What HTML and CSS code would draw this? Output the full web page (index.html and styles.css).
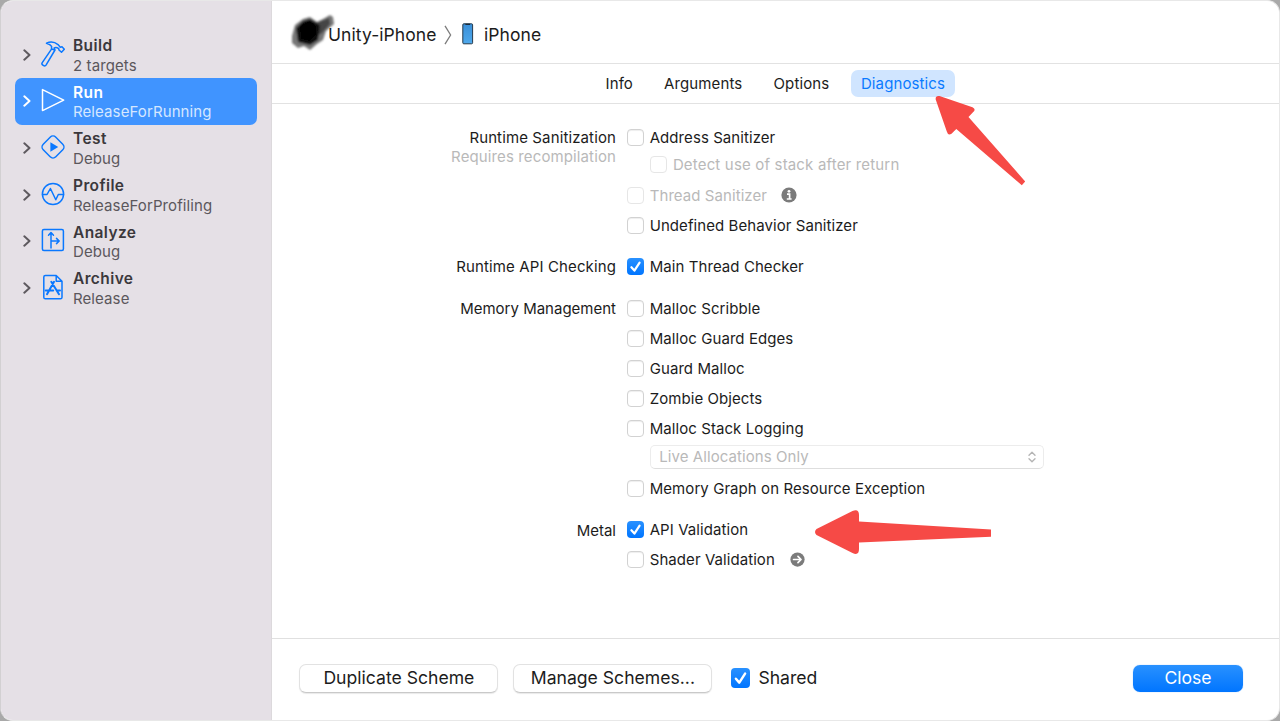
FILE: index.html
```html
<!DOCTYPE html>
<html lang="en">
<head>
<meta charset="utf-8">
<title>Edit Scheme</title>
<link rel="stylesheet" href="styles.css">
</head>
<body>
<svg width="0" height="0" class="defs">
  <symbol id="chev" viewBox="0 0 8 12"><path d="M1.3 1.3 6.5 6 1.3 10.7" fill="none" stroke="currentColor" stroke-width="2" stroke-linecap="round" stroke-linejoin="round"/></symbol>
  <symbol id="tick" viewBox="0 0 17 17"><path d="M4.4 9.2 7.4 12.6 12.6 4.6" fill="none" stroke="#fff" stroke-width="2.2" stroke-linecap="round" stroke-linejoin="round"/></symbol>
</svg>
<div class="window">
  <aside class="sidebar">
    <div class="item">
      <svg class="chev"><use href="#chev"/></svg>
      <svg class="icon" viewBox="0 0 26 26"><path d="M6.5 2.2C10 .6 14.5.8 18 3.6L20.3 6.2 22 5.8 24.3 8.3 21.5 11.3 19 9 18.7 7.6C17 6.4 15.6 6.3 14.2 6.9L15 9 6 24.2C4.8 26 1 23.8 2.1 21.8L11.5 8.1 11.6 5.4C10.6 3.6 8.8 2.8 6.5 2.2ZM11.5 8.1 15 9"/></svg>
      <div><b>Build</b><span>2 targets</span></div>
    </div>
    <div class="item selected">
      <svg class="chev"><use href="#chev"/></svg>
      <svg class="icon" viewBox="0 0 26 26"><path d="M2.5 2.6V23.6L23.7 13.1Z"/></svg>
      <div><b>Run</b><span>ReleaseForRunning</span></div>
    </div>
    <div class="item">
      <svg class="chev"><use href="#chev"/></svg>
      <svg class="icon" viewBox="0 0 26 26"><rect x="4.1" y="4.1" width="17.8" height="17.8" rx="4" transform="rotate(45 13 13)"/><path class="solid" d="M10.4 8.2V17.8L18.2 13Z"/></svg>
      <div><b>Test</b><span>Debug</span></div>
    </div>
    <div class="item">
      <svg class="chev"><use href="#chev"/></svg>
      <svg class="icon" viewBox="0 0 26 26"><circle cx="13" cy="13" r="10.6"/><path d="M2.5 13.5H7L10.4 7.5 15.8 18.8 18.3 13.5H23.5"/></svg>
      <div><b>Profile</b><span>ReleaseForProfiling</span></div>
    </div>
    <div class="item">
      <svg class="chev"><use href="#chev"/></svg>
      <svg class="icon" viewBox="0 0 26 26"><rect x="2.4" y="2.4" width="21" height="21" rx="1.5"/><path d="M11 21V6M8.5 8.3 11 5.5 13.5 8.3M11 14H19M16.5 11.4 19.2 14 16.5 16.6"/></svg>
      <div><b>Analyze</b><span>Debug</span></div>
    </div>
    <div class="item">
      <svg class="chev"><use href="#chev"/></svg>
      <svg class="icon" viewBox="0 0 26 26"><path d="M5.4 1.5H16.2L22 7.3V23.2Q22 24.8 20.4 24.8H5.4Q3.8 24.8 3.8 23.2V3.1Q3.8 1.5 5.4 1.5ZM16.2 1.5V7.3H22"/><path class="heavy" d="M11.3 7.8 19 20.2M14 7.8 7 20.2M5.7 16.4H13.2M16.8 16.4H20"/></svg>
      <div><b>Archive</b><span>Release</span></div>
    </div>
  </aside>
  <main class="main">
    <header class="path">
      <svg class="scribble" viewBox="0 0 46 40"><defs><filter id="soft" x="-20%" y="-20%" width="140%" height="140%"><feGaussianBlur stdDeviation="1"/></filter></defs>
        <g filter="url(#soft)"><path fill="#777" d="M2 23 5 12 13 6 20 4 27 9 33 6 40 2 43 4 44 11 36 18 33 27 27 31 20 37 14 33 8 35 2 30Z"/><path fill="#444" d="M26 10 39 5 40 11 32 20 26 24Z"/><path fill="#111" d="M6 15 13 8 20 6 27 10 30 13 28 27 20 32 8 29Z"/><path fill="#000" d="M10 13 20 8 26 13 26 22 20 28 11 26Z"/></g></svg>
      <span class="project">Unity-iPhone</span>
      <svg class="sep" viewBox="0 0 8 20"><path d="M1 .8 6.6 10 1 19.2" fill="none" stroke="#7d7d7d" stroke-width="1.3"/></svg>
      <svg class="phone" viewBox="0 0 12 22"><defs><linearGradient id="screen" x2="0" y2="1"><stop stop-color="#3a8fd8"/><stop offset="1" stop-color="#4fa9ec"/></linearGradient></defs><rect x=".8" y=".8" width="9.8" height="20" rx="1" fill="url(#screen)" stroke="#26394b" stroke-width="1"/><path d="M3.4 .8H8V1.9H3.4Z" fill="#1d2b39"/></svg>
      <span class="device">iPhone</span>
    </header>
    <nav class="tabs"><span class="t1">Info</span><span class="t2">Arguments</span><span class="t3">Options</span><span class="t4 active">Diagnostics</span></nav>
    <section class="form">
      <div class="group">
        <div class="label wide">Runtime Sanitization<small>Requires recompilation</small></div>
        <div class="opts">
          <div class="row"><i class="box"></i><span>Address Sanitizer</span></div>
          <div class="row nested off"><i class="box"></i><span>Detect use of stack after return</span></div>
          <div class="row off"><i class="box"></i><span>Thread Sanitizer</span><svg class="badge" viewBox="0 0 16 16"><circle cx="8" cy="8" r="7.6" fill="#7b7b7b"/><circle cx="8" cy="4.3" r="1.4" fill="#fff"/><path d="M6 7.2H8.6V12M5.8 12H10.6" fill="none" stroke="#fff" stroke-width="1.7"/></svg></div>
          <div class="row"><i class="box"></i><span>Undefined Behavior Sanitizer</span></div>
        </div>
      </div>
      <div class="group">
        <div class="label wide">Runtime API Checking</div>
        <div class="opts"><div class="row"><i class="box on"><svg><use href="#tick"/></svg></i><span>Main Thread Checker</span></div></div>
      </div>
      <div class="group">
        <div class="label">Memory Management</div>
        <div class="opts">
          <div class="row"><i class="box"></i><span>Malloc Scribble</span></div>
          <div class="row"><i class="box"></i><span>Malloc Guard Edges</span></div>
          <div class="row"><i class="box"></i><span>Guard Malloc</span></div>
          <div class="row"><i class="box"></i><span>Zombie Objects</span></div>
          <div class="row"><i class="box"></i><span>Malloc Stack Logging</span></div>
          <div class="select"><span>Live Allocations Only</span><svg viewBox="0 0 8 12"><path d="M1 4.2 4 1.2 7 4.2M1 7.8 4 10.8 7 7.8" fill="none" stroke="#b5b5b5" stroke-width="1.4" stroke-linecap="round" stroke-linejoin="round"/></svg></div>
          <div class="row"><i class="box"></i><span>Memory Graph on Resource Exception</span></div>
        </div>
      </div>
      <div class="group">
        <div class="label">Metal</div>
        <div class="opts">
          <div class="row"><i class="box on"><svg><use href="#tick"/></svg></i><span>API Validation</span></div>
          <div class="row"><i class="box"></i><span>Shader Validation</span><svg class="badge go" viewBox="0 0 16 16"><circle cx="8" cy="8" r="7.6" fill="#7b7b7b"/><path d="M3.8 8H11.6M8.5 4.7 11.8 8 8.5 11.3" fill="none" stroke="#fff" stroke-width="1.8" stroke-linecap="round" stroke-linejoin="round"/></svg></div>
        </div>
      </div>
    </section>
    <footer class="footer">
      <button class="btn dup">Duplicate Scheme</button>
      <button class="btn man">Manage Schemes...</button>
      <div class="shared"><i class="box on"><svg><use href="#tick"/></svg></i><span>Shared</span></div>
      <button class="btn primary">Close</button>
    </footer>
  </main>
</div>
<svg class="arrows" viewBox="0 0 1280 721"><path d="M935.7 99.5Q935.2 95.3 939.5 96L972.5 107.3Q976.5 109.5 973 112.3L968.5 117 1025.2 181.4 1021.8 185.3 956.3 129 951.5 133.8Q948 136 946.8 131.5ZM816.5 529 852.5 511Q859 508.5 859 515V521.6L991 529.5V536.7L859 542.6V549Q859 556 852.5 553L816.5 535Q813.5 532 816.5 529Z" fill="#f64a46"/></svg>
</body>
</html>
```
FILE: styles.css
```css
* { box-sizing: border-box; }
body { margin: 0; width: 1280px; height: 721px; overflow: hidden; background: #a9a9a9; font-family: Inter, "Liberation Sans", sans-serif; font-size: 15px; letter-spacing: .07px; color: #1c1c1c; }
.defs { position: absolute; }
.window { display: flex; height: 721px; border: 1px solid #e8e8e8; border-left-color: #d2d0d2; border-radius: 13px; overflow: hidden; background: #fff; }
.sidebar { width: 271px; flex: none; background: #e5e0e6; padding: 30.5px 15px 0 14px; border-right: 1px solid #dcd9dc; }
.item { display: flex; align-items: center; height: 46.6px; width: 241.5px; border-radius: 7px; padding-left: 8.4px; color: #5b575c; }
.chev { width: 8px; height: 12px; flex: none; color: #5e5a5f; margin: 0 8.6px 0 0; }
.icon { width: 26px; height: 26px; flex: none; fill: none; stroke: #0a78ff; stroke-width: 1.5; stroke-linejoin: round; stroke-linecap: round; margin: 0 7px 2px 0; }
.icon .solid { fill: #0a78ff; stroke: none; }
.icon .heavy { stroke-width: 2; }
.item div { padding-top: 2px; }
.item b, .item span { display: block; line-height: 19.5px; white-space: nowrap; }
.item b { font-size: 15.5px; font-weight: 600; letter-spacing: .4px; color: #3b383c; }
.item span { font-size: 15px; letter-spacing: .1px; }
.selected { background: #4094ff; color: #d5e7ff; }
.selected b, .selected .chev { color: #fff; }
.selected b { letter-spacing: .5px; }
.selected .icon { stroke: #fff; }
.main { flex: 1; display: flex; flex-direction: column; min-width: 0; }
.path { height: 63px; display: flex; align-items: center; padding: 5px 0 0 18px; border-bottom: 1px solid #e2e2e2; font-size: 17.5px; white-space: nowrap; }
.scribble { width: 46px; height: 40px; flex: none; margin-right: -8px; margin-top: -4px; }
.project { width: 109px; }
.sep { width: 8px; height: 20px; margin-left: 7px; }
.phone { width: 12px; height: 22px; margin: -1px 10px 0 10px; }
.tabs { height: 40px; display: flex; align-items: center; padding-left: 333.5px; border-bottom: 1px solid #e2e2e2; letter-spacing: .12px; }
.t1 { width: 58.5px; }
.t2 { width: 109.5px; }
.t3 { width: 77.5px; }
.active { background: #d0e5ff; color: #0a7aff; height: 27px; width: 104px; line-height: 27px; border-radius: 7px; text-align: center; }
.form { flex: 1; padding-top: 18px; display: flex; flex-direction: column; gap: 11px; }
.group { display: flex; }
.label { width: 344px; text-align: right; line-height: 31px; margin-right: 11px; letter-spacing: 0; }
.wide, .label small { letter-spacing: .12px; }
.label small { display: block; font-size: 15px; line-height: 20px; margin-top: -6px; color: #b9b9b9; }
.row { display: flex; align-items: center; height: 30.1px; white-space: nowrap; }
.row > span { margin-left: 5.7px; }
.nested { height: 25px; margin: 0 0 3px 23.2px; letter-spacing: .17px; }
.off { color: #b9b9b9; }
.box { display: block; width: 17px; height: 17px; flex: none; border: 1px solid #d2d2d2; border-radius: 4px; background: #fff; box-shadow: inset 0 1px 1px #eee; }
.off .box { border-color: #e6e6e6; box-shadow: none; }
.box.on { border: 0; background: linear-gradient(#2991ff, #0075ff); box-shadow: none; }
.box svg { display: block; width: 100%; height: 100%; }
.badge { width: 16px; height: 16px; margin-left: 14px; }
.go { width: 15px; height: 15px; margin-left: 15px; }
.select { width: 394px; height: 24px; margin: 1px 0 5px 23.2px; border: 1px solid #ececec; border-bottom-color: #dedede; border-radius: 5px; display: flex; align-items: center; justify-content: space-between; padding: 0 7px 0 8px; color: #b9b9b9; letter-spacing: .08px; }
.select svg { width: 8px; height: 12px; }
.footer { height: 82px; border-top: 1px solid #e0e0e0; display: flex; align-items: center; padding: 0 36px 2px 27.4px; font-size: 17.6px; letter-spacing: 0; }
.btn { font: inherit; color: inherit; letter-spacing: 0; height: 29px; width: 199px; padding: 0 0 2px; border: 1px solid #e2e2e2; border-bottom-color: #c9c9c9; border-radius: 7px; background: #fff; box-shadow: 0 1px 1px #e9e9e9; white-space: nowrap; }
.man { margin-left: 15px; }
.shared { display: flex; align-items: center; margin: 0 0 2px 18.2px; }
.shared .box { width: 19px; height: 20px; }
.shared span { margin-left: 8.8px; }
.primary { width: 110px; height: 27px; margin-left: auto; border: 0; color: #fff; background: linear-gradient(#2991ff, #0075ff); box-shadow: 0 0 1px #6db0ff; }
.arrows { position: absolute; left: 0; top: 0; width: 1280px; height: 721px; pointer-events: none; }
```
